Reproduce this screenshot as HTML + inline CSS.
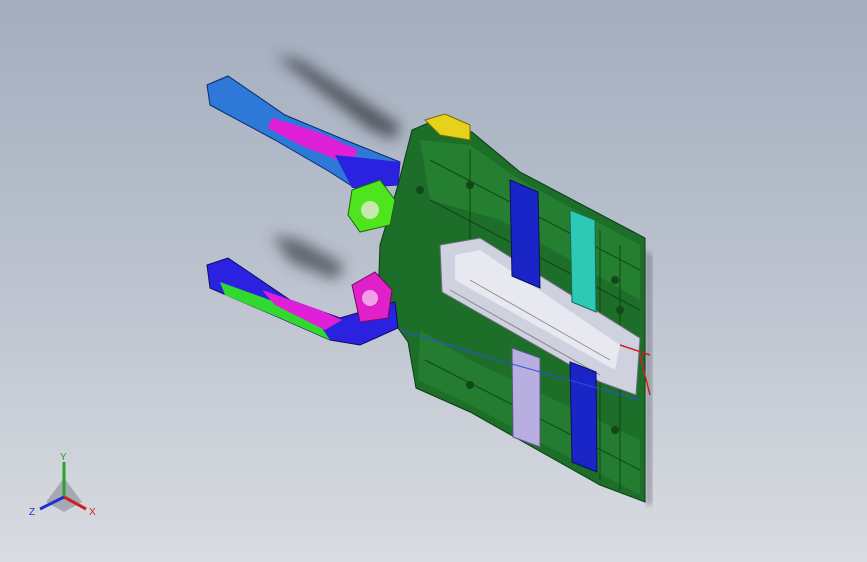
<!DOCTYPE html>
<html><head><meta charset="utf-8"><style>
html,body{margin:0;padding:0}
body{width:867px;height:562px;overflow:hidden;background:linear-gradient(180deg,#a3adbe 0%,#bcc3cf 50%,#d9dce1 100%);font-family:"Liberation Sans",sans-serif}
svg{position:absolute;left:0;top:0}
</style></head><body>
<svg width="867" height="562" viewBox="0 0 867 562">
<defs>
<filter id="b" x="-50%" y="-50%" width="200%" height="200%"><feGaussianBlur stdDeviation="7"/></filter>
<filter id="b2"><feGaussianBlur stdDeviation="3"/></filter>
</defs>
<path d="M275,55 L300,60 L400,125 L395,140 L370,130 Z" fill="#3a3d44" opacity=".8" filter="url(#b)"/>
<path d="M272,235 L300,240 L345,265 L335,280 L290,262 Z" fill="#3a3d44" opacity=".7" filter="url(#b)"/>
<path d="M646,250 L652,255 L652,505 L646,505 Z" fill="#2a2d33" opacity=".35" filter="url(#b2)"/>
<!-- main green panel -->
<path d="M412,130 L440,118 L472,132 L520,172 L645,238 L645,502 L600,485 L470,412 L416,388 L408,342 L378,300 L380,245 L398,185 Z" fill="#1c6e28" stroke="#0d3d14" stroke-width="1"/>
<path d="M420,140 L470,145 L520,180 L640,245 L640,300 L500,220 L430,200 Z" fill="#2a8a36" opacity=".6"/>
<path d="M420,330 L470,360 L640,440 L640,495 L470,405 L418,380 Z" fill="#2a8a36" opacity=".5"/>
<g stroke="#0c3a12" stroke-width="1" fill="none" opacity=".8">
<path d="M430,160 L640,270 M430,200 L640,310 M425,360 L640,470 M470,150 L470,250 M600,230 L600,480 M620,245 L620,490"/>
</g>
<g fill="#0f4a18"><circle cx="470" cy="185" r="4"/><circle cx="615" cy="280" r="4"/><circle cx="620" cy="310" r="4"/><circle cx="615" cy="430" r="4"/><circle cx="470" cy="385" r="4"/><circle cx="420" cy="190" r="4"/></g>
<path d="M425,120 L445,114 L470,125 L470,140 L440,135 Z" fill="#e6d21a" stroke="#7a6d00"/>
<!-- central rail -->
<path d="M440,245 L480,238 L640,338 L636,395 L600,382 L442,292 Z" fill="#cfd1df" stroke="#6c6f80"/>
<path d="M455,255 L480,250 L620,345 L615,370 L455,280 Z" fill="#eeeef5" opacity=".8"/>
<g stroke="#555" stroke-width="1" fill="none" opacity=".6"><path d="M450,290 L600,375 M470,280 L610,360"/></g>
<!-- bars -->
<path d="M510,180 L538,192 L540,288 L512,276 Z" fill="#1a25c8" stroke="#0a0f60"/>
<path d="M570,210 L595,220 L596,312 L572,302 Z" fill="#2ec9b5" stroke="#126a60"/>
<path d="M512,348 L540,358 L540,447 L513,437 Z" fill="#b8aee0" stroke="#5e578a"/>
<path d="M570,362 L596,372 L597,472 L572,462 Z" fill="#1a25c8" stroke="#0a0f60"/>
<!-- upper arm -->
<path d="M207,85 L228,76 L285,115 L345,140 L400,162 L398,185 L355,188 L330,172 L275,140 L210,105 Z" fill="#2e78d8" stroke="#0a2a70"/>
<path d="M272,118 L318,132 L358,150 L350,165 L300,145 L268,128 Z" fill="#e020d8"/>
<path d="M335,155 L400,162 L398,185 L352,188 Z" fill="#2a22e0"/>
<path d="M352,190 L380,180 L395,200 L390,225 L360,232 L348,215 Z" fill="#4ee41e" stroke="#1a6a08"/>
<circle cx="370" cy="210" r="9" fill="#c8e8b0"/>
<!-- lower arm -->
<path d="M207,265 L228,258 L290,300 L340,318 L395,302 L398,328 L360,345 L330,340 L280,318 L210,288 Z" fill="#2a22e0" stroke="#0a0f60"/>
<path d="M220,282 L270,300 L320,325 L330,340 L280,318 L225,295 Z" fill="#30d830"/>
<path d="M262,290 L320,310 L342,320 L325,330 L275,305 Z" fill="#e020d8"/>
<path d="M352,285 L375,272 L392,290 L388,318 L360,322 Z" fill="#e020c8" stroke="#700a60"/>
<circle cx="370" cy="298" r="8" fill="#f0a0e8"/>
<path d="M400,330 L480,355 L640,400" stroke="#2a50e0" stroke-width="1" fill="none"/>
<path d="M640,355 L650,395 M620,345 L650,355" stroke="#d02020" stroke-width="1.5" fill="none"/>
<!-- triad -->
<path d="M46,502 L64,478 L82,502 L64,512 Z" fill="#9a9ea8" opacity=".8"/>
<line x1="64" y1="497" x2="64" y2="462" stroke="#2ea02e" stroke-width="3"/>
<line x1="64" y1="497" x2="86" y2="509" stroke="#d02020" stroke-width="3"/>
<line x1="64" y1="497" x2="40" y2="509" stroke="#2030d0" stroke-width="3"/>
<text x="60" y="460" font-size="10" fill="#2ea02e">Y</text>
<text x="89" y="515" font-size="10" fill="#d02020">X</text>
<text x="29" y="515" font-size="10" fill="#2030d0">Z</text>
</svg>
</body></html>
